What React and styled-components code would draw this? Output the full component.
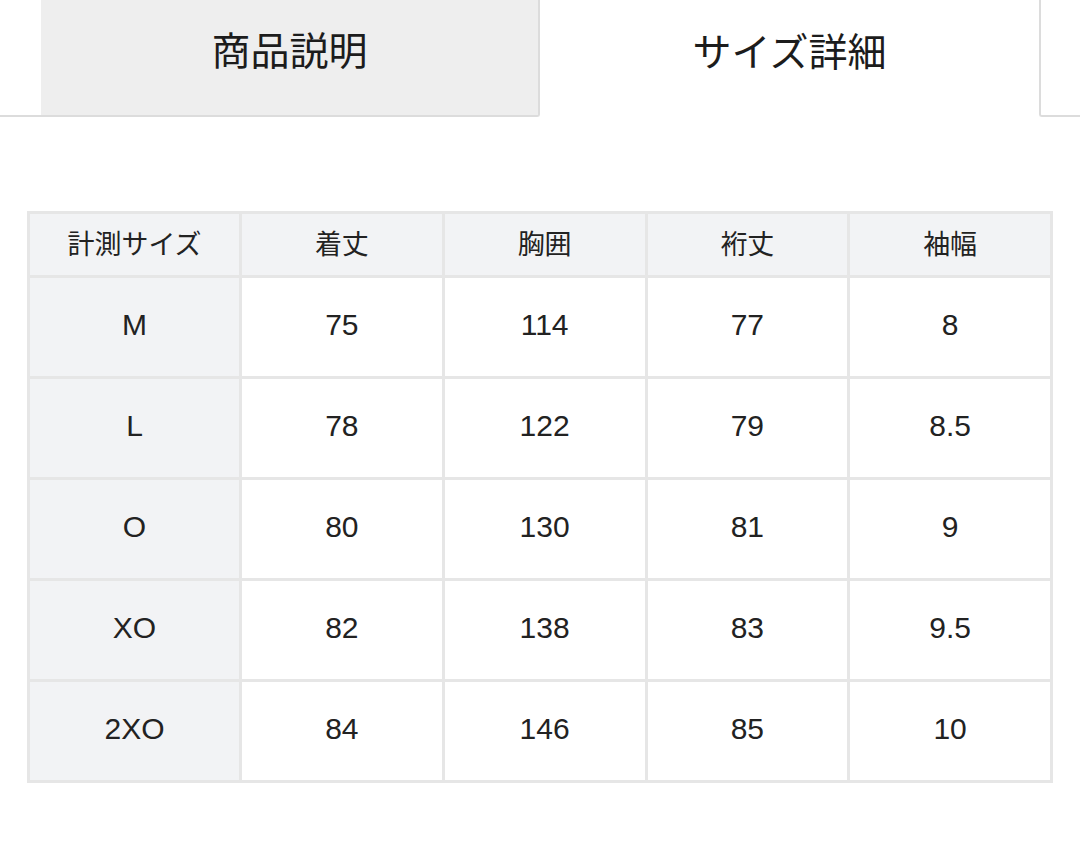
import React from 'react'
import styled, { createGlobalStyle } from 'styled-components'

const GlobalStyle = createGlobalStyle`
  html, body {
    margin: 0;
    padding: 0;
    background: #fff;
  }
  body {
    font-family: "Liberation Sans", "Noto Sans CJK JP", sans-serif;
    color: #222;
  }
`

const Page = styled.div`
  width: 1080px;
  height: 847px;
  overflow: hidden;
`

const TabBar = styled.div`
  display: flex;
  justify-content: center;
  overflow: hidden;
  height: 117px;
`

const Tab = styled.div`
  flex: 0 0 499px;
  box-sizing: border-box;
  display: flex;
  align-items: center;
  justify-content: center;
  padding-bottom: 20px;
  font-family: "Noto Sans CJK JP", sans-serif;
  font-weight: 400;
  font-size: 39px;
  color: #1c1c1c;
  background: ${p => (p.muted ? '#eeeeee' : '#fff')};
  border-bottom: ${p => (p.active ? 'none' : '2px solid #dcdcdc')};
  border-right: ${p => (p.edge === 'right' ? '2px solid #dcdcdc' : 'none')};
  border-left: ${p => (p.edge === 'left' ? '2px solid #dcdcdc' : 'none')};
  border-radius: ${p =>
    p.edge === 'right' ? '0 0 3px 0' : p.edge === 'left' ? '0 0 0 3px' : '0'};
`

const TableWrap = styled.div`
  padding: 94px 0 0 27px;
`

const SizeTable = styled.table`
  border-collapse: collapse;
  width: 1026px;
  table-layout: fixed;
  border: 3px solid #e6e6e6;
`

const Cell = styled.td`
  border: 3px solid #e6e6e6;
  text-align: center;
  vertical-align: middle;
  padding: 0 0 4px;
  height: ${p => (p.head ? '57px' : '94px')};
  background: ${p => (p.shade ? '#f2f3f5' : '#fff')};
  font-family: ${p =>
    p.head ? '"Noto Sans CJK JP", sans-serif' : '"Liberation Sans", "Noto Sans CJK JP", sans-serif'};
  font-weight: 400;
  font-size: ${p => (p.head ? '27px' : '30px')};
  color: #222;
`

const headers = ['計測サイズ', '着丈', '胸囲', '裄丈', '袖幅']

const rows = [
  ['M', '75', '114', '77', '8'],
  ['L', '78', '122', '79', '8.5'],
  ['O', '80', '130', '81', '9'],
  ['XO', '82', '138', '83', '9.5'],
  ['2XO', '84', '146', '85', '10']
]

const App = () => (
  <Page>
    <GlobalStyle />
    <TabBar>
      <Tab />
      <Tab muted edge='right'>商品説明</Tab>
      <Tab active>サイズ詳細</Tab>
      <Tab edge='left' />
    </TabBar>
    <TableWrap>
      <SizeTable>
        <colgroup>
          <col style={{ width: 212 }} />
          <col />
          <col />
          <col />
          <col />
        </colgroup>
        <thead>
          <tr>
            {headers.map((h) => (
              <Cell as='th' key={h} head shade>{h}</Cell>
            ))}
          </tr>
        </thead>
        <tbody>
          {rows.map((row) => (
            <tr key={row[0]}>
              {row.map((v, i) => (
                <Cell key={i} shade={i === 0}>{v}</Cell>
              ))}
            </tr>
          ))}
        </tbody>
      </SizeTable>
    </TableWrap>
  </Page>
)

export default App
